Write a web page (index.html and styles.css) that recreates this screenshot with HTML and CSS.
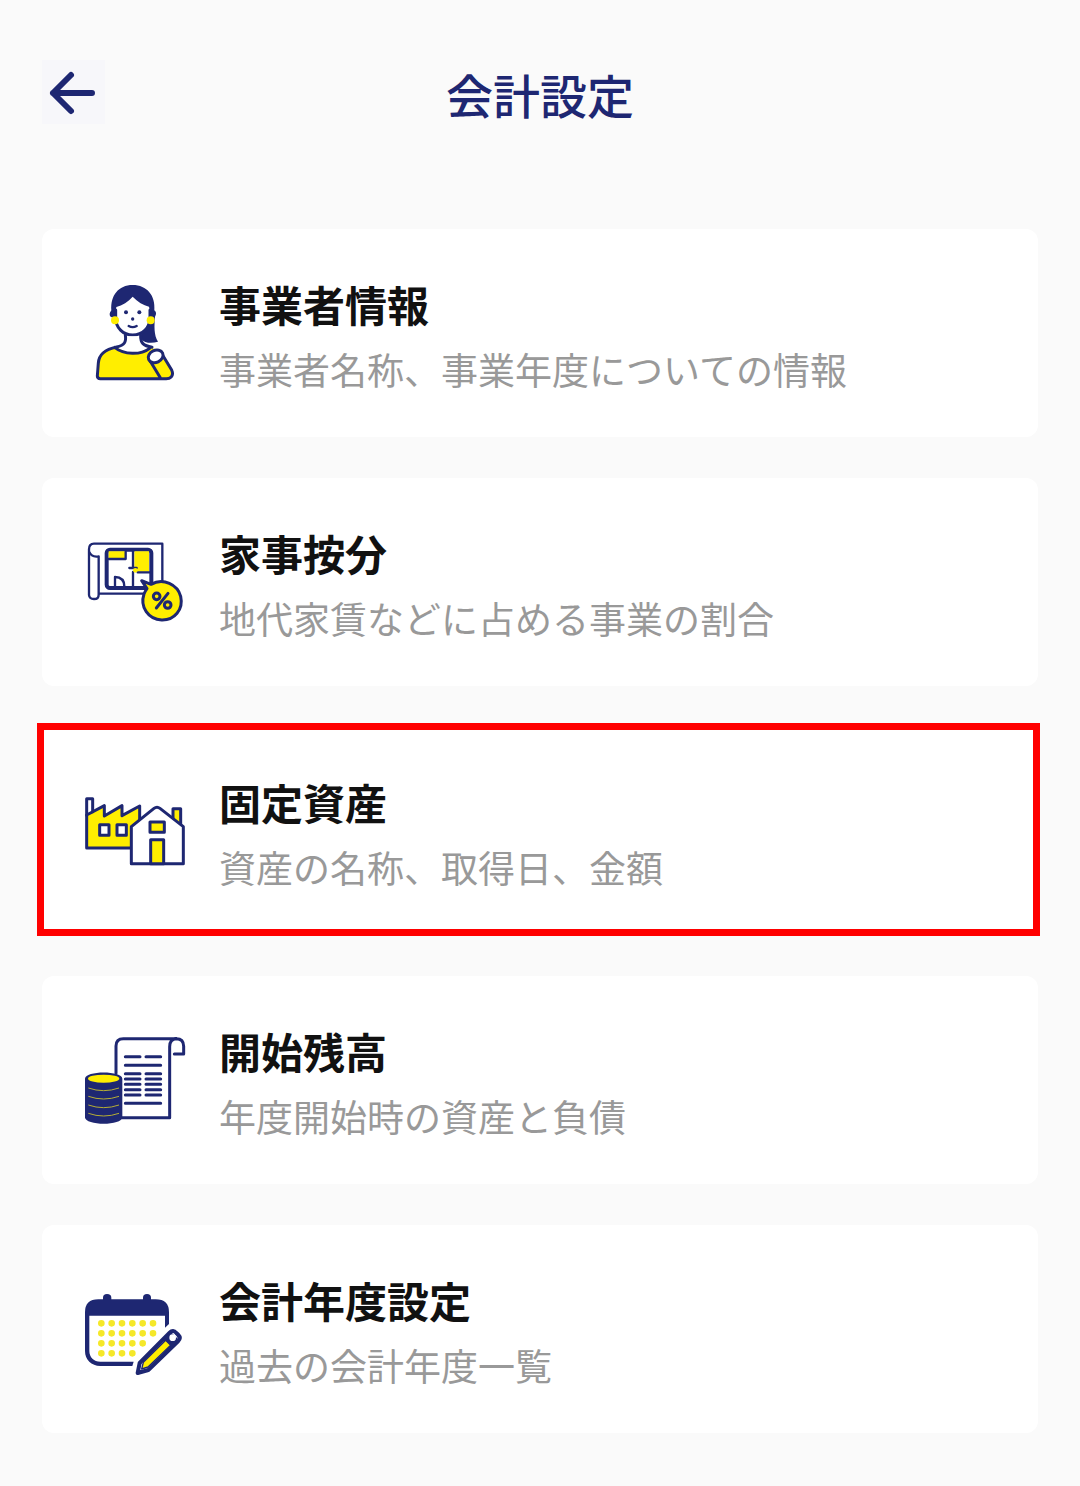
FILE: index.html
```html
<!DOCTYPE html>
<html lang="ja">
<head>
    <meta charset="UTF-8">
    <meta name="viewport" content="width=device-width, initial-scale=1.0">
    <title>会計設定</title>
    <link rel="stylesheet" href="styles.css">
</head>
<body>
    <header class="header">
        <button class="back-button" type="button" aria-label="戻る" onclick="history.back()">
            <svg class="back-icon" viewBox="0 0 63 63" aria-hidden="true">
                <path d="M11 32H50M29 14L11 32L29 50"/>
            </svg>
        </button>
        <h1 class="header-title">会計設定</h1>
    </header>

    <main class="menu">
        <!-- 事業者情報 -->
        <a class="card" href="#business">
            <svg class="icon" viewBox="0 -3 360 360" aria-hidden="true">
                <path class="fill-navy" d="M104 118C104 112 107 110 109 106C106 62 130 30 173 30C216 30 242 62 238 106C244 110 245 118 240 125C238 150 236 180 249 200C231 206 207 204 201 194L200 165C225 145 228 115 222 95C205 91 188 80 173 65C160 80 142 91 124 96L120 125C110 130 104 126 104 118Z"/>
                <path class="white" d="M125 103C144 96 160 83 173 68C187 83 204 95 222 102V128C222 156 203 178 173 178C144 178 125 156 125 128Z"/>
                <path class="line" d="M122 105V128C122 158 144 180 173 180C203 180 225 158 225 128V105"/>
                <path class="white" d="M153 184C155 202 150 212 137 217L173 237L212 217C198 211 194 200 195 184"/>
                <path class="yellow" d="M67 311L70 264C72 238 88 224 125 216C153 239 194 239 220 218L258 224L292 286C299 305 283 313 267 312Z"/>
                <path class="line" d="M151 180C154 201 149 211 125 216C88 224 72 238 70 264L67 303Q67 311 76 311H267C286 314 298 303 290 285L264 242M197 180C196 205 205 212 231 217M119 217C147 240 197 241 224 220M225 257L256 308"/>
                <ellipse class="white line" cx="242" cy="244" rx="23" ry="18" transform="rotate(-25 242 244)"/>
                <circle class="fill-yellow" cx="120" cy="136" r="12"/>
                <circle class="fill-yellow" cx="227" cy="136" r="12"/>
                <circle class="fill-navy" cx="153" cy="112" r="6"/>
                <circle class="fill-navy" cx="193" cy="112" r="6"/>
                <circle class="fill-navy" cx="173" cy="132" r="5"/>
                <path class="line thin" d="M161 153Q173 160 185 153"/>
            </svg>
            <div class="card-text">
                <h2 class="card-title">事業者情報</h2>
                <p class="card-desc">事業者名称、事業年度についての情報</p>
            </div>
        </a>

        <!-- 家事按分 -->
        <a class="card" href="#proration">
            <svg class="icon" viewBox="0 -6 360 360" aria-hidden="true">
                <path class="line thin" d="M57 56H262V206H72M42 73Q42 56 57 56M42 73V210Q43 222 57 222Q71 222 71 209V94Q50 98 42 79"/>
                <rect class="white line thick" x="95" y="74" width="134" height="115" rx="10"/>
                <path class="fill-yellow" d="M101 79H151V99H101ZM178 79H222V140H178Z"/>
                <path class="line thin" d="M101 102H152V80M174 78V128M163 129H185M174 141V188M188 142H224M120 186V156Q148 157 148 184"/>
                <circle class="fill-yellow" cx="181" cy="136" r="7"/>
                <path class="yellow line" d="M200 167L228 178C265 157 308 179 317 214C326 254 298 286 260 285C220 283 194 246 207 207C212 196 216 191 216 191Z"/>
                <circle class="line" cx="245" cy="214" r="10"/>
                <circle class="line" cx="278" cy="240" r="10"/>
                <path class="line" d="M279 205L244 249"/>
            </svg>
            <div class="card-text">
                <h2 class="card-title">家事按分</h2>
                <p class="card-desc">地代家賃などに占める事業の割合</p>
            </div>
        </a>

        <!-- 固定資産 -->
        <a class="card card-selected" href="#assets">
            <svg class="icon" viewBox="0 -9 360 360" aria-hidden="true">
                <path class="yellow line" d="M35 120L88 92V123L141 92V122L194 93V219H35Z"/>
                <path class="line" d="M35 121V71H53V110"/>
                <path class="white line" d="M74 149H102V181H74ZM126 149H154V181H126Z"/>
                <path class="yellow line" d="M294 128V101H317V150"/>
                <path class="white line" d="M169 266V155L237 100Q246 93 255 100L325 155V266Z"/>
                <path class="yellow line" d="M225 141H268V172H225ZM227 266V194H266V266Z"/>
            </svg>
            <div class="card-text">
                <h2 class="card-title">固定資産</h2>
                <p class="card-desc">資産の名称、取得日、金額</p>
            </div>
        </a>

        <!-- 開始残高 -->
        <a class="card" href="#balance">
            <svg class="icon" viewBox="0 3 360 360" aria-hidden="true">
                <path class="line" d="M123 160V78Q123 56 145 56H303M140 293H284V80Q284 57 304 56Q326 56 326 79V102H298"/>
                <path class="line" d="M151 110H195M213 110H257M151 136H257M151 161H195M213 161H257M151 177H195M213 177H257M151 193H195M213 193H257M151 209H195M213 209H257M151 225H195M213 225H257M151 250H257"/>
                <path class="fill-navy" d="M30 176C30 151 142 151 142 176V292C142 318 30 318 30 292Z"/>
                <ellipse class="fill-yellow" cx="86" cy="176" rx="47" ry="12"/>
                <path class="coin-line" d="M40 204Q86 220 132 204M40 229Q86 245 132 229M40 255Q86 271 132 255M40 280Q86 296 132 280"/>
            </svg>
            <div class="card-text">
                <h2 class="card-title">開始残高</h2>
                <p class="card-desc">年度開始時の資産と負債</p>
            </div>
        </a>

        <!-- 会計年度設定 -->
        <a class="card" href="#fiscal-year">
            <svg class="icon" viewBox="0 -15 360 360" aria-hidden="true">
                <path class="fill-navy" d="M30 112Q30 73 70 73H84V68Q84 57 96 57Q109 57 109 68V73H204V68Q204 57 216 57Q228 57 228 68V73H242Q282 73 282 112V147L270 158V122H43V228C43 247 57 260 76 260H176L172 273H76C49 273 30 254 30 228Z"/>
                <path class="dots" d="M79 145H235M79 175H235M79 205H204M79 235H173"/>
                <path class="white line thick" d="M188 294L194 264L284 173Q294 163 304 174L310 180Q319 189 309 199L220 285Z"/>
                <path class="fill-navy" d="M262 195L287 170L313 196L288 221Z"/>
                <path class="yellow line pencil" d="M200 282L205 262L272 196L287 211L219 276Z"/>
                <circle class="white" cx="293" cy="188" r="10"/>
            </svg>
            <div class="card-text">
                <h2 class="card-title">会計年度設定</h2>
                <p class="card-desc">過去の会計年度一覧</p>
            </div>
        </a>
    </main>
</body>
</html>
```
FILE: styles.css
```css
* {
    box-sizing: border-box;
    margin: 0;
    padding: 0;
}
body {
    background-color: #fafafa;
    font-family: "Noto Sans CJK JP", sans-serif;
}

/* ヘッダー */
.header {
    display: grid;
    grid-template-columns: 63px 1fr 63px;
    padding: 60px 42px 0;
}
.back-button {
    width: 63px;
    height: 64px;
    border: none;
    background-color: #f7f7fa;
    cursor: pointer;
}
.back-icon {
    display: block;
    width: 63px;
    height: 63px;
    fill: none;
    stroke: #1e2772;
    stroke-width: 6;
    stroke-linecap: round;
    stroke-linejoin: round;
}
.header-title {
    color: #1e2772;
    font-size: 47px;
    font-weight: 500;
    line-height: 68px;
    text-align: center;
}

/* メニュー */
.menu {
    display: flex;
    flex-direction: column;
    gap: 41px;
    padding: 101px 42px 52px;
}
.card {
    position: relative;
    display: flex;
    align-items: center;
    gap: 24px;
    padding: 43px 33px 41px;
    border-radius: 12px;
    background-color: #fff;
    text-decoration: none;
}
.card-selected::after {
    content: "";
    position: absolute;
    top: -4px;
    right: -2px;
    bottom: -1px;
    left: -5px;
    border: 7px solid #f00;
}
.card-title {
    color: #111;
    font-size: 42px;
    font-weight: 700;
    line-height: 64px;
}
.card-desc {
    margin-top: 6px;
    color: #999;
    font-size: 37px;
    font-weight: 400;
    line-height: 54px;
}

/* アイコン */
.icon {
    flex-shrink: 0;
    width: 120px;
    height: 120px;
    fill: none;
}
.line {
    stroke: #1e2772;
    stroke-width: 9;
    stroke-linecap: round;
    stroke-linejoin: round;
}
.thin {
    stroke-width: 7;
}
.thick {
    stroke-width: 12;
}
.pencil {
    stroke-width: 4;
}
.white {
    fill: #fff;
}
.yellow,
.fill-yellow {
    fill: #ffee00;
}
.fill-navy {
    fill: #1e2772;
}
.coin-line {
    stroke: #b5ad35;
    stroke-width: 3;
}
.dots {
    stroke: #f5e829;
    stroke-width: 20;
    stroke-linecap: round;
    stroke-dasharray: 0 31;
}
```
